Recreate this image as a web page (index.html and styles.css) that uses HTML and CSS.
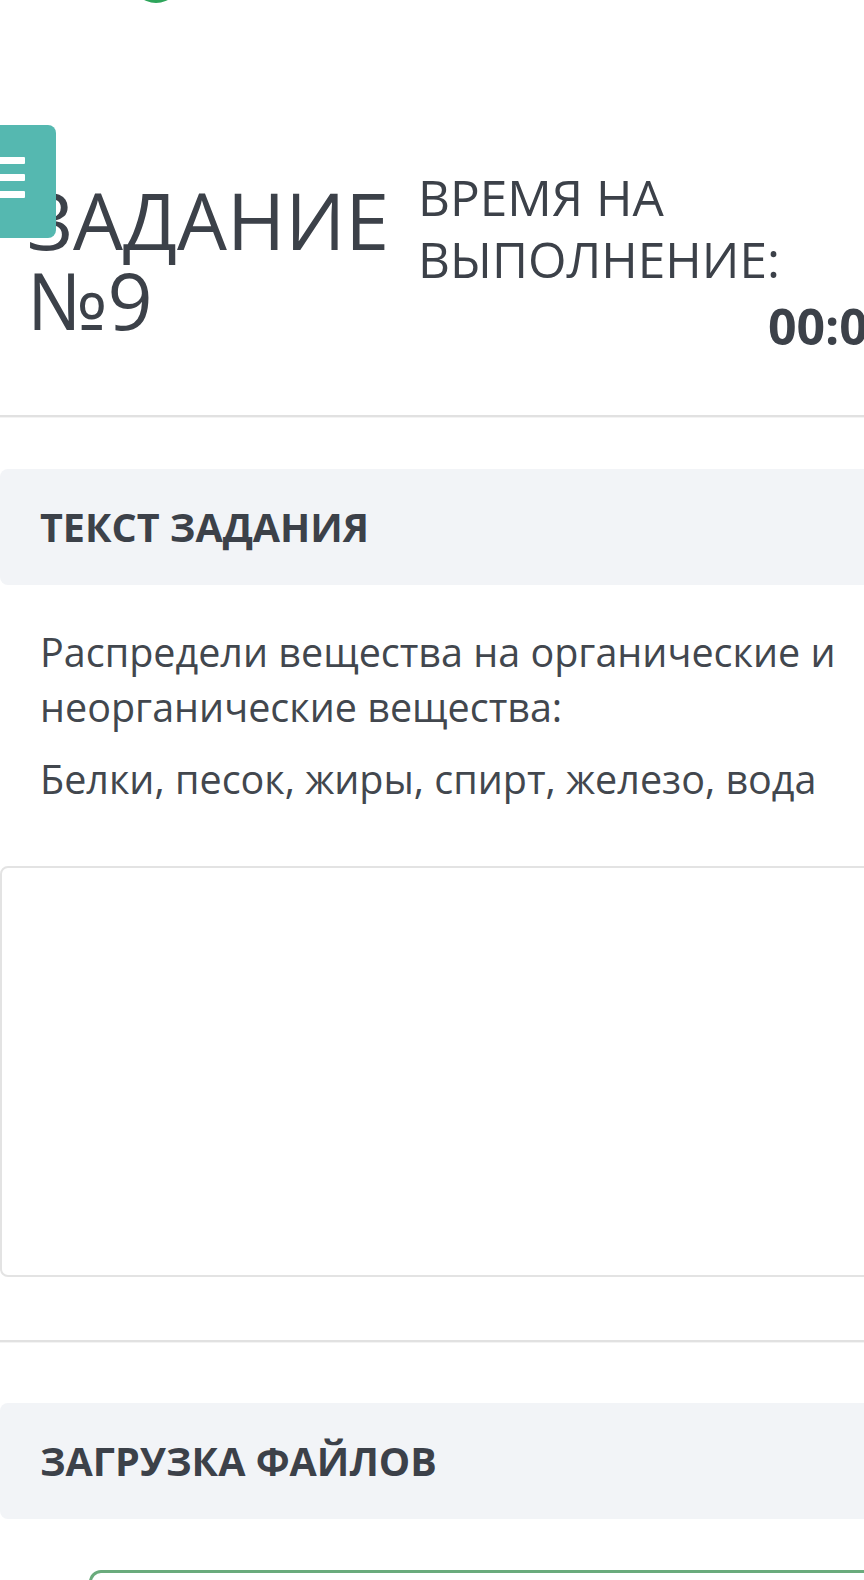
FILE: index.html
```html
<!DOCTYPE html>
<html lang="ru">
<head>
    <meta charset="UTF-8">
    <meta name="viewport" content="width=device-width, initial-scale=1.0">
    <title>Задание №9</title>
    <link rel="stylesheet" href="styles.css">
</head>
<body>

    <div class="page">
        <div class="logo-row">
            <div class="logo"></div>
        </div>

        <button class="menu-btn" aria-label="Меню">
            <span></span>
            <span></span>
            <span></span>
        </button>

        <header class="task-head">
            <h1 class="task-title">ЗАДАНИЕ<br>№9</h1>
            <div class="timer">
                <div class="timer-label">ВРЕМЯ НА ВЫПОЛНЕНИЕ:</div>
                <div class="timer-value">00:00:00</div>
            </div>
        </header>

        <hr class="divider divider-top">

        <section class="panel">
            <div class="panel-head">ТЕКСТ ЗАДАНИЯ</div>
            <div class="panel-body">
                <p>Распредели вещества на органические и неорганические вещества:</p>
                <p>Белки, песок, жиры, спирт, железо, вода</p>
            </div>
            <div class="answer-box"></div>
        </section>

        <hr class="divider divider-mid">

        <section class="panel">
            <div class="panel-head">ЗАГРУЗКА ФАЙЛОВ</div>
            <div class="dropzone"></div>
        </section>
    </div>

</body>
</html>
```

FILE: styles.css
```css
html, body {
    margin: 0;
    overflow: hidden;
    background: #fff;
}
body {
    font-family: "Open Sans", "Noto Sans", sans-serif;
    color: #3c4149;
}
.page {
    position: relative;
    width: 1000px;
}
.logo-row {
    display: flow-root;
    padding-left: 131px;
    height: 3px;
}
.logo {
    width: 50px;
    height: 50px;
    margin-top: -47px;
    border-radius: 50%;
    background: #2ea55b;
}

/* menu button sits over the title */
.menu-btn {
    position: absolute;
    left: -34px;
    top: 125px;
    width: 90px;
    height: 113px;
    border: none;
    border-radius: 8px;
    background: #55b8b0;
    display: flex;
    flex-direction: column;
    align-items: center;
    justify-content: center;
    gap: 10px;
    padding: 0 0 8px;
}
.menu-btn span {
    display: block;
    width: 28px;
    height: 7px;
    border-radius: 1px;
    background: #fff;
}

.task-head {
    display: flex;
    align-items: flex-start;
    margin-top: 165px;
    padding-left: 27px;
}
.task-title {
    margin: 12px 0 0;
    width: 391px;
    font-size: 79px;
    line-height: 80px;
    font-weight: 400;
}
.timer {
    width: 550px;
}
.timer-label {
    width: 400px;
    margin-top: -2px;
    font-size: 49.5px;
    line-height: 62px;
}
.timer-value {
    margin-top: 5px;
    text-align: right;
    font-size: 50px;
    line-height: 62px;
    font-weight: 700;
}

.divider {
    margin: 0;
    border: none;
    border-top: 2px solid #e1e1e1;
    border-bottom: 1px solid #f3f3f3;
}
.divider-top {
    margin-top: 58px;
}
.divider-mid {
    margin-top: 63px;
}

.panel-head {
    margin-top: 51px;
    height: 116px;
    line-height: 116px;
    padding-left: 40px;
    background: #f2f4f7;
    border-radius: 8px 0 0 8px;
    font-size: 39.5px;
    font-weight: 700;
}
.divider-mid + .panel .panel-head {
    margin-top: 60px;
}
.panel-body {
    padding: 40px 0 0 40px;
    width: 820px;
    font-size: 39.5px;
    line-height: 55px;
    color: #42474e;
}
.panel-body p {
    margin: 0 0 17px;
}
.answer-box {
    margin-top: 59px;
    height: 407px;
    border: 2px solid #e3e3e3;
    border-radius: 8px;
}
.dropzone {
    margin: 51px 0 0 89px;
    height: 200px;
    border: 3px solid #6aab7c;
    border-radius: 12px;
}
```
